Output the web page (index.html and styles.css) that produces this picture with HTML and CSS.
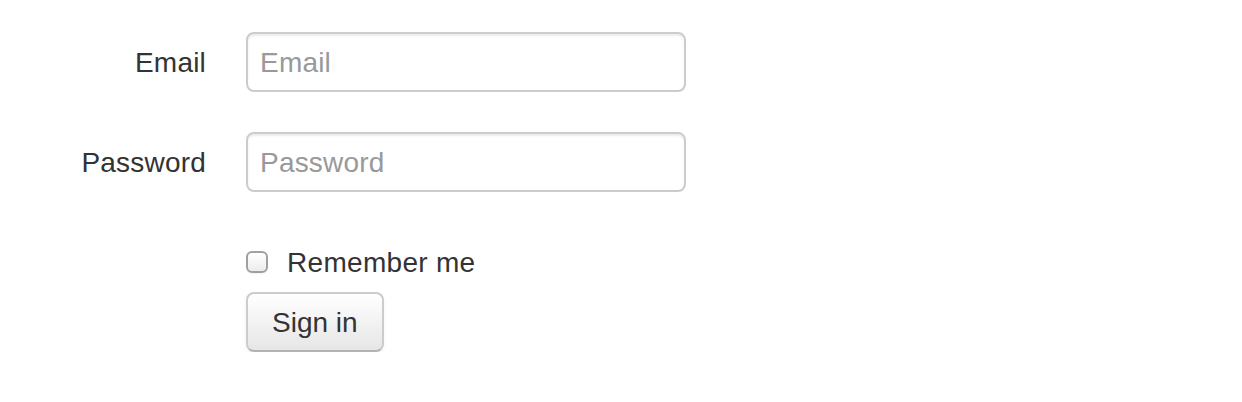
FILE: index.html
```html
<!DOCTYPE html>
<html>
<head>
<meta charset="utf-8">
<link rel="stylesheet" href="styles.css">
</head>
<body>
<form class="form">
  <div class="group">
    <label class="label" for="email">Email</label>
    <input class="input" id="email" type="text" placeholder="Email">
  </div>
  <div class="group">
    <label class="label" for="pw">Password</label>
    <input class="input" id="pw" type="password" placeholder="Password">
  </div>
  <div class="group">
    <span></span>
    <div class="controls">
      <label class="check"><span class="box"></span>Remember me</label>
      <button class="btn" type="button">Sign in</button>
    </div>
  </div>
</form>
</body>
</html>
```

FILE: styles.css
```css
html, body {
  margin: 0;
  padding: 0;
  background: #fff;
}
body {
  font-family: "Liberation Sans", Arial, Helvetica, sans-serif;
  font-size: 28px;
  line-height: 40px;
  color: #333;
}
.form {
  padding-top: 32px;
  display: flex;
  flex-direction: column;
  gap: 40px;
}
.group {
  display: grid;
  grid-template-columns: 206px 440px;
  column-gap: 40px;
}
.label {
  text-align: right;
  padding-top: 11px;
  line-height: 40px;
  letter-spacing: 0.2px;
}
.input {
  box-sizing: border-box;
  width: 440px;
  height: 60px;
  margin: 0;
  padding: 9px 12px 7px;
  border: 2px solid #ccc;
  border-radius: 8px;
  font-family: inherit;
  font-size: 28px;
  line-height: 40px;
  color: #555;
  background: #fff;
  box-shadow: inset 0 2px 2px rgba(0, 0, 0, 0.075);
  outline: none;
  letter-spacing: 0.2px;
}
.input::placeholder {
  color: #999;
}
.controls {
  display: flex;
  flex-direction: column;
  align-items: flex-start;
}
.check {
  display: flex;
  align-items: center;
  padding-top: 11px;
  margin-bottom: 9px;
  line-height: 40px;
  letter-spacing: 0.3px;
}
.box {
  box-sizing: border-box;
  width: 22px;
  height: 22px;
  margin-left: 0;
  margin-right: 19px;
  margin-top: -3px;
  border: 2px solid #a0a0a0;
  border-radius: 6px;
  background: linear-gradient(#ffffff, #ececec);
  box-shadow: inset 0 1px 2px rgba(255,255,255,0.9), 0 1px 1px rgba(0,0,0,0.05);
}
.btn {
  box-sizing: border-box;
  height: 60px;
  margin: 0;
  padding: 9px 24px 7px;
  font-family: inherit;
  font-size: 28px;
  line-height: 40px;
  color: #333;
  border: 2px solid #ccc;
  border-bottom-color: #b3b3b3;
  border-radius: 8px;
  background: linear-gradient(#ffffff, #e6e6e6);
  box-shadow: inset 0 2px 0 rgba(255,255,255,0.2), 0 2px 4px rgba(0,0,0,0.05);
}
```
